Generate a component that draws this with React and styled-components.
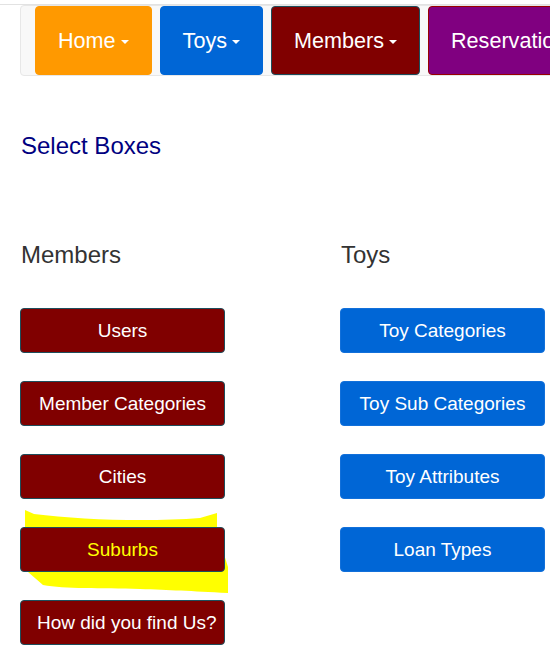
import styled, { createGlobalStyle } from 'styled-components'

const GlobalStyle = createGlobalStyle`
    body {
        margin: 0;
        background: #fff;
        font-family: "Liberation Sans", Arial, sans-serif;
        overflow: hidden;
    }
`

const navItems = [
    { label: 'Home', bg: '#ff9900', border: '#ff9900', caret: true },
    { label: 'Toys', bg: '#0066d6', border: '#0066d6', caret: true },
    { label: 'Members', bg: '#800000', border: '#1d4e5c', caret: true },
    { label: 'Reservations', bg: '#800080', border: '#990000', caret: true },
]

const members = ['Users', 'Member Categories', 'Cities', 'Suburbs', 'How did you find Us?']
const toys = ['Toy Categories', 'Toy Sub Categories', 'Toy Attributes', 'Loan Types']

const Highlight = () => (
    <Marker width="212" height="90" viewBox="0 0 212 90">
        <path
            d="M5,3 L14,7 C60,13 130,15 180,11 L197,6 L197,25 L208,60 L208,86 C170,84 150,83 120,82 C80,81 45,82 23,78 L8,65 L5,25 Z"
            fill="#ffff00"
        />
    </Marker>
)

const App = () => {
    const renderButton = (label, kind) => {
        if (label === 'Suburbs') {
            return (
                <Marked key={label}>
                    <Highlight />
                    <BoxButton kind={kind} highlight>{label}</BoxButton>
                </Marked>
            )
        }
        return <BoxButton key={label} kind={kind}>{label}</BoxButton>
    }

    return (
        <>
            <GlobalStyle />
            <TopRule />
            <Navbar>
                {navItems.map(item => (
                    <NavButton key={item.label} bg={item.bg} border={item.border}>
                        {item.label}
                        {item.caret && <Caret />}
                    </NavButton>
                ))}
            </Navbar>
            <Content>
                <PageTitle>Select Boxes</PageTitle>
                <Columns>
                    <Column>
                        <Heading>Members</Heading>
                        <ButtonList>
                            {members.map(label => renderButton(label, 'member'))}
                        </ButtonList>
                    </Column>
                    <Column>
                        <Heading>Toys</Heading>
                        <ButtonList>
                            {toys.map(label => renderButton(label, 'toy'))}
                        </ButtonList>
                    </Column>
                </Columns>
            </Content>
        </>
    )
}

const TopRule = styled.div`
    height: 1px;
    margin-top: 4px;
    background: #e2e2e2;
`

const Navbar = styled.nav`
    display: flex;
    gap: 8px;
    width: max-content;
    margin-left: 20px;
    padding: 0 14px 0 14px;
    background: #f8f8f8;
    border: 1px solid #e7e7e7;
    border-radius: 4px;
`

const NavButton = styled.button`
    display: flex;
    align-items: center;
    height: 69px;
    margin-top: 0;
    padding: 0 22px;
    background-color: ${props => props.bg};
    border: 1px solid ${props => props.border};
    border-radius: 4px;
    color: #fff;
    font-family: "Liberation Sans", Arial, sans-serif;
    font-size: 21.6px;
    white-space: nowrap;
`

const Caret = styled.span`
    display: inline-block;
    width: 0;
    height: 0;
    margin-left: 5px;
    margin-top: 2px;
    border-top: 4px solid #fff;
    border-left: 4.5px solid transparent;
    border-right: 4.5px solid transparent;
`

const Content = styled.main`
    padding: 0 20px;
`

const PageTitle = styled.h2`
    margin: 57px 0 0 1px;
    color: #000080;
    font-size: 24px;
    font-weight: normal;
    line-height: 26px;
`

const Columns = styled.div`
    display: grid;
    grid-template-columns: 320px 320px;
    margin-top: 83px;
`

const Column = styled.section`
    display: flex;
    flex-direction: column;
`

const Heading = styled.h3`
    margin: 0 0 0 1px;
    color: #333;
    font-size: 24px;
    font-weight: normal;
    line-height: 26px;
`

const ButtonList = styled.div`
    display: flex;
    flex-direction: column;
    gap: 28px;
    margin-top: 40px;
`

const BoxButton = styled.button`
    position: relative;
    z-index: 1;
    width: 205px;
    height: 45px;
    padding: 0 16px;
    background-color: ${props => props.kind === 'member' ? '#800000' : '#0066d6'};
    border: 1px solid ${props => props.kind === 'member' ? '#1d4e5c' : '#1270da'};
    border-radius: 4px;
    color: ${props => props.highlight ? '#ffff00' : '#fff'};
    font-family: "Liberation Sans", Arial, sans-serif;
    font-size: 19px;
    text-align: center;
    white-space: nowrap;
`

const Marked = styled.div`
    position: relative;
    width: 205px;
    height: 45px;
`

const Marker = styled.svg`
    position: absolute;
    left: 0;
    top: -20px;
    z-index: 0;
`

export default App
